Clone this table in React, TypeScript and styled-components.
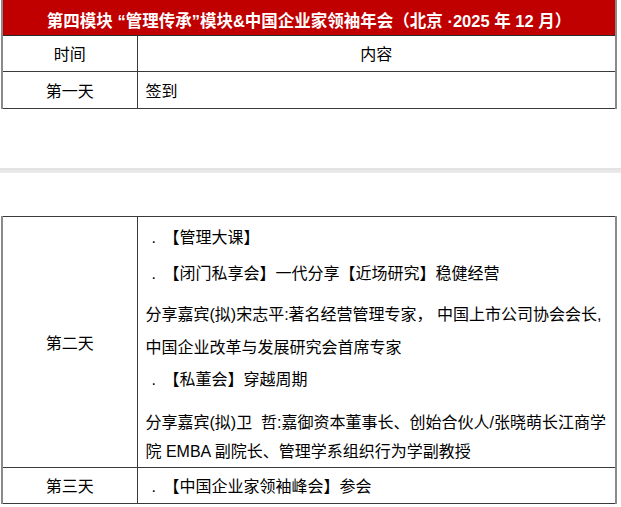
import React from "react";
import styled, { createGlobalStyle } from "styled-components";

const GlobalStyle = createGlobalStyle`
  html, body { margin: 0; padding: 0; background: #ffffff; }
  body { font-family: "Liberation Sans", "Noto Sans CJK SC", sans-serif; }
`;

const Page = styled.div`
  width: 621px;
  padding-bottom: 4px;
`;

const Table = styled.table`
  border-collapse: collapse;
  table-layout: fixed;
  width: 616px;
  margin-left: 1px;
  font-family: "Liberation Sans", "Noto Sans CJK SC", sans-serif;
  font-size: 16px;
  color: #000;
  border-left: 2px solid #8a8a8a;
  border-right: 2px solid #8a8a8a;
`;

const Col = styled.col<{ $w?: number }>`
  width: ${(p) => (p.$w ? `${p.$w}px` : "auto")};
`;

const TitleCell = styled.td`
  height: 35px;
  padding: 6px 0 0 0;
  box-sizing: border-box;
  background: #c00000;
  color: #ffffff;
  font-weight: bold;
  font-size: 16.5px;
  text-align: center;
  border-bottom: 1px solid #2a2a2a;
  white-space: nowrap;
`;

const Cell = styled.td<{ $h?: number; $align?: "left" | "center"; $top?: boolean }>`
  height: ${(p) => (p.$h ? `${p.$h}px` : "auto")};
  box-sizing: border-box;
  border: 1px solid #3a3a3a;
  padding: ${(p) => (p.$top ? "6px 0 1px 8px" : p.$align === "center" ? "0" : "0 0 0 8px")};
  text-align: ${(p) => p.$align || "left"};
  vertical-align: ${(p) => (p.$top ? "top" : "middle")};
  white-space: nowrap;
`;

const Para = styled.p<{ $lh: number; $mt?: number }>`
  margin: ${(p) => p.$mt || 0}px 0 0 0;
  line-height: ${(p) => p.$lh}px;
`;

const Bullet = styled.span`
  display: inline-block;
  width: 18px;
  padding-left: 6px;
  box-sizing: border-box;
`;

const Gap = styled.div`
  height: 59px;
`;

const Band = styled.div`
  height: 5px;
  background: linear-gradient(#e2e2e2, #ececec);
`;

const GapAfter = styled.div`
  height: 43px;
`;

export default function App() {
  return (
    <>
      <GlobalStyle />
      <Page>
        <Table>
          <colgroup>
            <Col $w={135} />
            <Col />
          </colgroup>
          <tbody>
            <tr>
              <TitleCell colSpan={2}>
                第四模块 “管理传承”模块&amp;中国企业家领袖年会（北京 ·2025 年 12 月）
              </TitleCell>
            </tr>
            <tr>
              <Cell $h={36} $align="center">时间</Cell>
              <Cell $h={36} $align="center">内容</Cell>
            </tr>
            <tr>
              <Cell $h={37} $align="center">第一天</Cell>
              <Cell $h={37}>签到</Cell>
            </tr>
          </tbody>
        </Table>
        <Gap />
        <Band />
        <GapAfter />
        <Table>
          <colgroup>
            <Col $w={135} />
            <Col />
          </colgroup>
          <tbody>
            <tr>
              <Cell $align="center">第二天</Cell>
              <Cell $top>
                <Para $lh={30}>
                  <Bullet>.</Bullet>【管理大课】
                </Para>
                <Para $lh={30} $mt={6}>
                  <Bullet>.</Bullet>【闭门私享会】一代分享【近场研究】稳健经营
                </Para>
                <Para $lh={33} $mt={9}>
                  分享嘉宾(拟)宋志平:著名经营管理专家， 中国上市公司协会会长,
                  <br />
                  中国企业改革与发展研究会首席专家
                </Para>
                <Para $lh={30} $mt={1}>
                  <Bullet>.</Bullet>【私董会】穿越周期
                </Para>
                <Para $lh={29} $mt={13}>
                  分享嘉宾(拟)卫&nbsp;&nbsp;哲:嘉御资本董事长、创始合伙人/张晓萌长江商学
                  <br />
                  院 EMBA 副院长、管理学系组织行为学副教授
                </Para>
              </Cell>
            </tr>
            <tr>
              <Cell $h={36} $align="center">第三天</Cell>
              <Cell $h={36}>
                <Bullet>.</Bullet>【中国企业家领袖峰会】参会
              </Cell>
            </tr>
          </tbody>
        </Table>
      </Page>
    </>
  );
}
